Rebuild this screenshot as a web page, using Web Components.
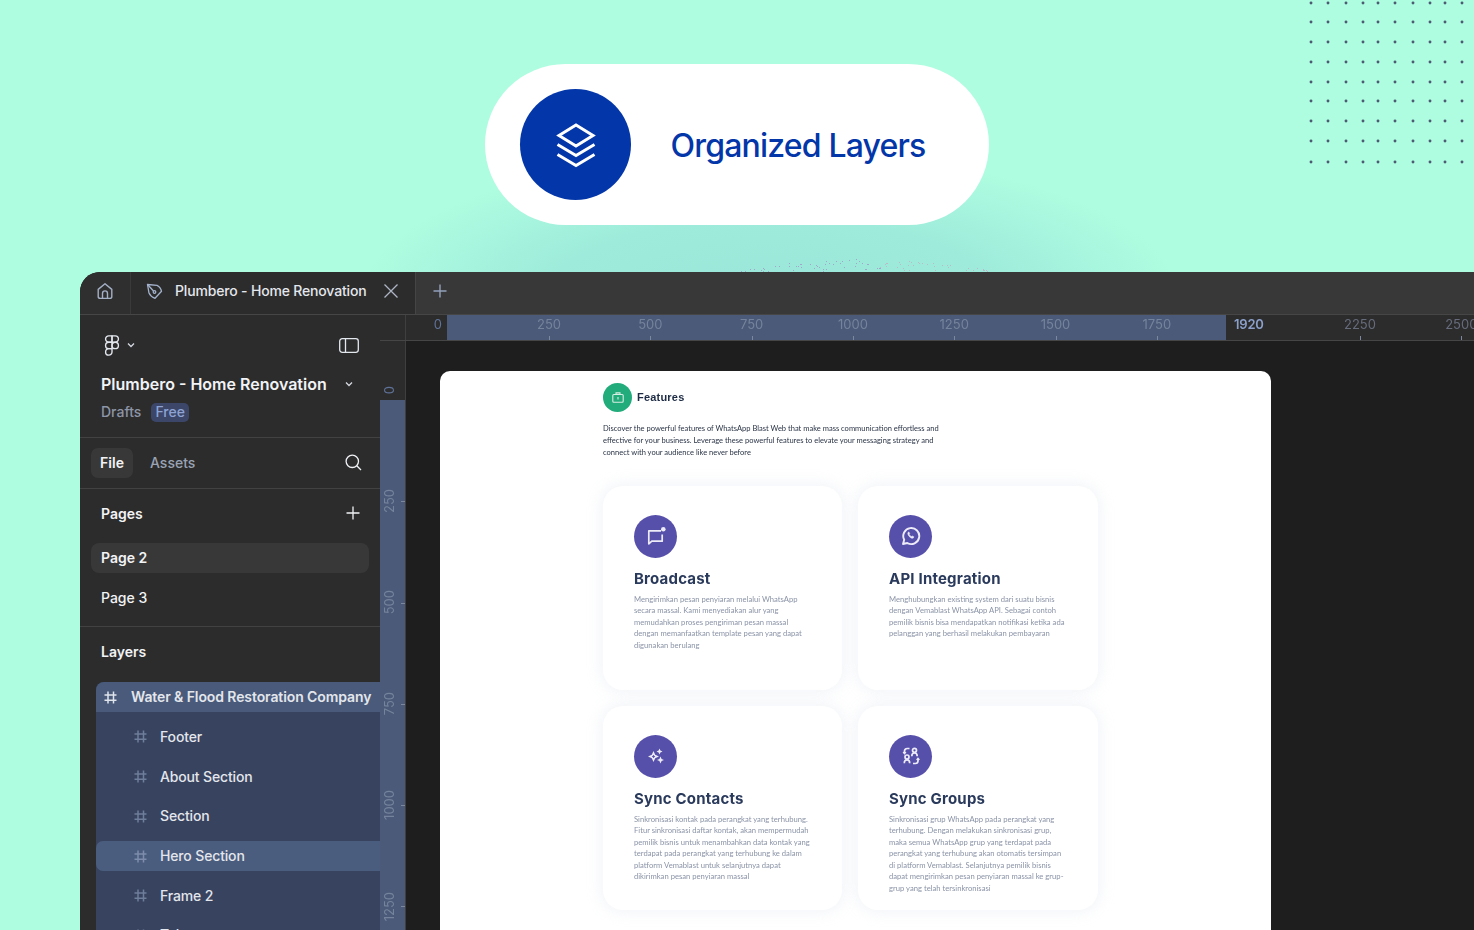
<!doctype html>
<html lang="en">
<head>
<meta charset="utf-8">
<title>Organized Layers</title>
<style>
  html, body { margin: 0; height: 930px; overflow: hidden; }
  body { width: 1474px; font-family: Inter, "Liberation Sans", sans-serif; background: #aefde0; }
</style>
</head>
<body>
<promo-page>
  <hero-banner slot="hero">Organized Layers</hero-banner>
  <editor-window slot="window">
    <tab-bar slot="tabs" title-text="Plumbero - Home Renovation"></tab-bar>
    <x-ruler slot="xruler"></x-ruler>
    <side-panel slot="side"></side-panel>
    <y-ruler slot="yruler"></y-ruler>
    <design-frame slot="canvas">
      <feature-card heading="Broadcast" icon="broadcast">Mengirimkan pesan penyiaran melalui WhatsApp<br>secara massal. Kami menyediakan alur yang<br>memudahkan proses pengiriman pesan massal<br>dengan memanfaatkan template pesan yang dapat<br>digunakan berulang</feature-card>
      <feature-card heading="API Integration" icon="whatsapp">Menghubungkan existing system dari suatu bisnis<br>dengan Vemablast WhatsApp API. Sebagai contoh<br>pemilik bisnis bisa mendapatkan notifikasi ketika ada<br>pelanggan yang berhasil melakukan pembayaran</feature-card>
      <feature-card heading="Sync Contacts" icon="sparkle">Sinkronisasi kontak pada perangkat yang terhubung.<br>Fitur sinkronisasi daftar kontak, akan mempermudah<br>pemilik bisnis untuk menambahkan data kontak yang<br>terdapat pada perangkat yang terhubung ke dalam<br>platform Vemablast untuk selanjutnya dapat<br>dikirimkan pesan penyiaran massal</feature-card>
      <feature-card heading="Sync Groups" icon="groups">Sinkronisasi grup WhatsApp pada perangkat yang<br>terhubung. Dengan melakukan sinkronisasi grup,<br>maka semua WhatsApp grup yang terdapat pada<br>perangkat yang terhubung akan otomatis tersimpan<br>di platform Vemablast. Selanjutnya pemilik bisnis<br>dapat mengirimkan pesan penyiaran massal ke grup-<br>grup yang telah tersinkronisasi</feature-card>
    </design-frame>
  </editor-window>
</promo-page>

<script>
const define = (name, html, setup) => {
  customElements.define(name, class extends HTMLElement {
    constructor() {
      super();
      const root = this.attachShadow({ mode: 'open' });
      root.innerHTML = typeof html === 'function' ? html(this) : html;
    }
    connectedCallback() {
      if (setup && !this._done) { this._done = true; setup(this.shadowRoot, this); }
    }
  });
};

const HASH = `<svg width="13" height="13" viewBox="0 0 13 13" fill="none" stroke="currentColor" stroke-width="1.5"><path d="M4 .5v12M9.500 .5v12M.5 4h12M.5 9.300h12"/></svg>`;

define('promo-page', `
<style>
  :host { display: block; width: 1474px; height: 930px; position: relative; overflow: hidden;
    background:
      radial-gradient(ellipse 410px 150px at 770px 300px, #9ae6d9 0%, #9eebdb 55%, rgba(174,253,224,0) 100%),
      #aefde0; }
  .top { height: 272px; }
  .win { padding-left: 80px; }
  svg.dots { position: absolute; left: 0; top: 0; pointer-events: none; }
</style>
<svg class="dots" width="1474" height="272"></svg>
<div class="top"><slot name="hero"></slot></div>
<div class="win"><slot name="window"></slot></div>
`, (root) => {
  const svg = root.querySelector('svg.dots');
  let out = '';
  const xs = [1311,1328,1346,1363,1378,1395,1413,1430,1445,1462];
  const ys = [3,22,42,62,82,101,121,141,162];
  ys.forEach(y => xs.forEach(x => { out += `<circle cx="${x}" cy="${y}" r="1.45" fill="#4c5a72"/>`; }));
  let s = 98765;
  const r = () => { s = (s * 1103515245 + 12345) & 0x7fffffff; return ((s >> 8) & 0xffff) / 0xffff; };
  for (let i = 0; i < 85; i++) {
    const x = 741 + r() * 250;
    const top = 272 - 13 * Math.pow(Math.sin(Math.PI * (x - 741) / 250), .6);
    const y = top + r() * (271 - top);
    const fill = x > 880 ? '#bdb9c9' : '#a3a6c8';
    out += `<rect x="${Math.round(x)}" y="${Math.round(y)}" width="1" height="1" fill="${fill}"/>`;
  }
  svg.innerHTML = out;
});

define('hero-banner', `
<style>
  :host { display: block; padding: 64px 0 0 485px; }
  .pill { width: 504px; height: 161px; box-sizing: border-box; padding-left: 35px; border-radius: 81px; background: #fff;
    display: flex; align-items: center; gap: 39.500px; }
  .disc { width: 111px; height: 111px; border-radius: 50%; background: #0336a8; display: flex; align-items: center; justify-content: center; flex: none; }
  .label { font: 500 32px/40px Inter, "Liberation Sans", sans-serif; letter-spacing: -.82px; color: #0336a8; padding-top: 2px; }
</style>
<div class="pill">
  <div class="disc">
    <svg width="42" height="46" viewBox="0 0 42 46" fill="none" stroke="#fff" stroke-width="3" stroke-linejoin="miter">
      <path d="M21 3 38 13.500 21 24 4 13.500Z"/>
      <path d="M2.500 22.500 21 33.500 39.500 22.500"/>
      <path d="M2.500 32.500 21 43.500 39.500 32.500"/>
    </svg>
  </div>
  <div class="label"><slot></slot></div>
</div>
`);

define('editor-window', `
<style>
  :host { display: block; width: 1394px; height: 658px; overflow: hidden; border-radius: 20px 0 0 0; background: #1e1e1e; }
  .grid { display: grid; grid-template-columns: 300px 26px 1fr; grid-template-rows: 43px 26px 1fr; height: 100%; filter: blur(.3px); }
  .tabs { grid-column: 1 / -1; }
  .x { grid-column: 2 / -1; }
  .side { grid-column: 1; grid-row: 2 / 4; min-height: 0; }
  .y { grid-column: 2; grid-row: 3; min-height: 0; }
  .c { grid-column: 3; grid-row: 3; min-height: 0; overflow: hidden; }
</style>
<div class="grid">
  <div class="tabs"><slot name="tabs"></slot></div>
  <div class="side"><slot name="side"></slot></div>
  <div class="x"><slot name="xruler"></slot></div>
  <div class="y"><slot name="yruler"></slot></div>
  <div class="c"><slot name="canvas"></slot></div>
</div>
`);

define('tab-bar', (el) => `
<style>
  :host { display: block; height: 43px; box-sizing: border-box; background: #383838; border-bottom: 1px solid #464646; }
  .bar { display: flex; height: 42px; align-items: stretch; }
  .home { width: 51px; flex: none; background: #2f2f2f; border-right: 1px solid #3a3a3a; box-sizing: border-box; display: flex; align-items: center; padding: 0 0 4px 16px; color: #a4b0c6; }
  .tab { width: 285px; flex: none; background: #2c2c2c; border-right: 1px solid #454545; box-sizing: border-box; display: flex; align-items: center; padding: 0 0 4px 15px; color: #e4e7ec;
    font: 500 14px/20px Inter, "Liberation Sans", sans-serif; letter-spacing: -.17px; }
  .name { margin-left: 12px; width: 191px; white-space: nowrap; }
  .x { margin-left: 17px; display: flex; color: #aeb6c5; }
  .add { margin-left: 17px; padding-bottom: 4px; display: flex; align-items: center; color: #93a0ba; }
  .pen { color: #a4b3cd; display: flex; }
</style>
<div class="bar">
  <div class="home"><svg width="18" height="18" viewBox="0 0 18 18" fill="none" stroke="currentColor" stroke-width="1.400" stroke-linejoin="round"><path d="M2.200 7.400 9 1.800l6.800 5.600v7a2 2 0 0 1-2 2H4.200a2 2 0 0 1-2-2Z"/><path d="M6.500 16.400v-5a2.500 2.500 0 0 1 5 0v5"/></svg></div>
  <div class="tab">
    <span class="pen"><svg width="17" height="17" viewBox="0 0 17 17" fill="none" stroke="currentColor" stroke-width="1.300" stroke-linejoin="round"><path d="M1.500 1.500 11 2.300c2.400 1.200 4 3 4.500 6l-6.500 7c-2.800-.8-4.800-2.600-6-5.200Z"/><path d="M1.500 1.500 7.500 8" /><circle cx="8.500" cy="9" r="1.300"/></svg></span>
    <span class="name">${el.getAttribute('title-text')}</span>
    <span class="x"><svg width="16" height="16" viewBox="0 0 16 16" fill="none" stroke="currentColor" stroke-width="1.300"><path d="M1.500 1.500l13 13M14.500 1.500l-13 13"/></svg></span>
  </div>
  <div class="add"><svg width="14" height="14" viewBox="0 0 14 14" fill="none" stroke="currentColor" stroke-width="1.400"><path d="M7 .5v13M.5 7h13"/></svg></div>
</div>
`);

const xCell = (n) => `<div class="cell"><span>${n}</span></div>`;
define('x-ruler', `
<style>
  :host { display: block; height: 26px; overflow: hidden; background: #2c2c2c; border-bottom: 1px solid #464646; box-sizing: border-box; font: 400 13px/1 Inter, "Liberation Sans", sans-serif; }
  .row { display: flex; height: 25px; width: 1200px; }
  .corner { width: 26px; flex: none; box-sizing: border-box; border-right: 1px solid #3f3f3f; }
  .zero { width: 41px; flex: none; box-sizing: border-box; text-align: right; padding: 3px 5px 0 0; color: #5f7299; }
  .hi { width: 779px; flex: none; background: #4a5a78; display: flex; padding-left: 51.400px; box-sizing: border-box; color: #76839c; }
  .cell { width: 101.300px; flex: none; height: 100%; position: relative; text-align: center; padding-top: 3px; box-sizing: border-box; white-space: nowrap; }
  .cell::after { content: ""; position: absolute; left: 50%; bottom: 0; width: 1px; height: 4px; background: #7c88a0; }
  .rest { display: flex; color: #666c7c; }
  .lead { width: 83.350px; flex: none; box-sizing: border-box; padding: 3px 0 0 8px; color: #8a9fca; font-weight: 600; letter-spacing: -.2px; }
</style>
<div class="row">
  <div class="corner"></div>
  <div class="zero">0</div>
  <div class="hi">${[250,500,750,1000,1250,1500,1750].map(xCell).join('')}</div>
  <div class="rest"><div class="lead">1920</div>${[2250,2500].map(xCell).join('')}</div>
</div>
`);

define('y-ruler', `
<style>
  :host { display: block; height: 100%; overflow: hidden; background: #2c2c2c; box-sizing: border-box; border-right: 1px solid #3f3f3f; font: 400 13px/1 Inter, "Liberation Sans", sans-serif; }
  .col { display: flex; flex-direction: column; height: 100%; }
  .zero { height: 59px; flex: none; box-sizing: border-box; display: flex; align-items: flex-end; justify-content: flex-start; padding: 0 0 6px 3px; color: #5f7299; }
  .hi { flex: 1; background: #4a5a78; color: #76839c; padding-top: 50.600px; box-sizing: border-box; min-height: 0; overflow: hidden; }
  .cell { height: 101.300px; display: flex; align-items: center; padding-left: 3px; position: relative; box-sizing: border-box; }
  .cell::after { content: ""; position: absolute; right: 0; top: 50%; width: 4px; height: 1px; background: #7c88a0; }
  span { writing-mode: vertical-rl; transform: rotate(180deg); white-space: nowrap; }
</style>
<div class="col">
  <div class="zero"><span>0</span></div>
  <div class="hi">${[250,500,750,1000,1250].map(n => `<div class="cell"><span>${n}</span></div>`).join('')}</div>
</div>
`);

define('side-panel', `
<style>
  :host { display: block; height: 100%; overflow: hidden; background: #2c2c2c; color: #f2f3f5; font: 500 14px/20px Inter, "Liberation Sans", sans-serif; box-sizing: border-box; }
  .sec { border-bottom: 1px solid #424242; box-sizing: border-box; }
  .head { height: 123px; padding: 19px 21px 0 21px; }
  .r { display: flex; align-items: center; height: 22px; }
  .r1 { justify-content: space-between; }
  .logo { display: flex; align-items: center; gap: 4px; }
  .r2 { margin-top: 17px; font-weight: 600; font-size: 16px; letter-spacing: 0; color: #f1f3f6; gap: 18px; white-space: nowrap; }
  .r3 { margin-top: 6px; color: #8d95a7; gap: 10px; }
  .free { background: #3b4668; color: #8ea3d4; border-radius: 5px; height: 19px; padding: 0 4px; display: flex; align-items: center; }
  .tabs { height: 51px; padding: 10px 18px 0 11px; display: flex; align-items: flex-start; }
  .file { width: 42px; height: 30px; border-radius: 7px; background: #383838; font-weight: 600; display: flex; align-items: center; justify-content: center; }
  .assets { margin-left: 17px; height: 30px; display: flex; align-items: center; color: #9aa3b4; }
  .search { margin-left: auto; height: 28px; display: flex; align-items: center; }
  .pages { height: 138px; }
  .ptitle { height: 50px; padding: 0 20px 2px 21px; box-sizing: border-box; display: flex; align-items: center; justify-content: space-between; font-weight: 600; }
  .ptitle span { position: relative; top: 1px; }
  .plist { display: flex; flex-direction: column; gap: 10px; margin: 4px 11px 0 11px; }
  .page { height: 30px; border-radius: 8px; padding-left: 10px; display: flex; align-items: center; }
  .page.on { background: #383838; font-weight: 600; }
  .ltitle { height: 49px; padding-left: 21px; display: flex; align-items: center; font-weight: 600; }
  .list { margin: 6px 0 0 16px; background: #38435f; border-radius: 8px 0 0 0; display: flex; flex-direction: column; gap: 9.700px; padding-bottom: 12px; }
  .item { height: 30px; flex: none; display: flex; align-items: center; padding-left: 38px; gap: 13px; color: #e3e6ec; white-space: nowrap; letter-spacing: -.15px; }
  .item svg { color: #6e7e9b; flex: none; }
  .item.root { padding-left: 8px; gap: 14px; background: #495a7a; border-radius: 8px 0 0 0; font-weight: 600; margin-bottom: .3px; letter-spacing: -.1px; }
  .item.root svg { color: #e0e4ec; }
  .item.sel { background: #4b5d7e; border-radius: 7px 0 0 7px; }
  .item.sel svg { color: #7d8dab; }
</style>
<div class="sec head">
  <div class="r r1">
    <div class="logo">
      <svg width="22" height="22" viewBox="0 0 24 24" fill="none" stroke="#e3e7ee" stroke-width="1.500" stroke-linejoin="round"><path d="M5 5.500A3.500 3.500 0 0 1 8.500 2H12v7H8.500A3.500 3.500 0 0 1 5 5.500Z"/><path d="M12 2h3.500a3.500 3.500 0 1 1 0 7H12V2Z"/><path d="M12 12.500a3.500 3.500 0 1 1 7 0 3.500 3.500 0 1 1-7 0Z"/><path d="M5 19.500A3.500 3.500 0 0 1 8.500 16H12v3.500a3.500 3.500 0 1 1-7 0Z"/><path d="M5 12.500A3.500 3.500 0 0 1 8.500 9H12v7H8.500A3.500 3.500 0 0 1 5 12.500Z"/></svg>
      <svg width="8" height="6" viewBox="0 0 8 6" fill="none" stroke="#d5d9e0" stroke-width="1.300"><path d="M1 1.500 4 4.500 7 1.500"/></svg>
    </div>
    <svg width="20" height="15" viewBox="0 0 20 15" fill="none" stroke="#e3e7ee" stroke-width="1.300"><rect x=".7" y=".7" width="18.600" height="13.600" rx="2.500"/><path d="M6.500 .7v13.600"/></svg>
  </div>
  <div class="r r2"><span>Plumbero - Home Renovation</span><svg width="8" height="6" viewBox="0 0 8 6" fill="none" stroke="#d5d9e0" stroke-width="1.300"><path d="M1 1.500 4 4.500 7 1.500"/></svg></div>
  <div class="r r3"><span>Drafts</span><span class="free">Free</span></div>
</div>
<div class="sec tabs">
  <div class="file">File</div>
  <div class="assets">Assets</div>
  <div class="search"><svg width="17" height="17" viewBox="0 0 17 17" fill="none" stroke="#f0f2f5" stroke-width="1.300"><circle cx="7.300" cy="7.300" r="6.200"/><path d="M11.800 11.800 16 16"/></svg></div>
</div>
<div class="sec pages">
  <div class="ptitle"><span>Pages</span><svg width="14" height="14" viewBox="0 0 14 14" fill="none" stroke="#f0f2f5" stroke-width="1.300"><path d="M7 .5v13M.5 7h13"/></svg></div>
  <div class="plist"><div class="page on">Page 2</div><div class="page">Page 3</div></div>
</div>
<div class="ltitle">Layers</div>
<div class="list">
  <div class="item root">${HASH}<span>Water &amp; Flood Restoration Company</span></div>
  <div class="item">${HASH}<span>Footer</span></div>
  <div class="item">${HASH}<span>About Section</span></div>
  <div class="item">${HASH}<span>Section</span></div>
  <div class="item sel">${HASH}<span>Hero Section</span></div>
  <div class="item">${HASH}<span>Frame 2</span></div>
  <div class="item">${HASH}<span>Tabs</span></div>
</div>
`);

define('design-frame', `
<style>
  :host { display: block; padding: 30px 0 0 34px; }
  .frame { width: 831px; height: 600px; background: #fff; border-radius: 10px 10px 0 0; box-sizing: border-box; padding: 12px 0 0 163px; filter: blur(.25px); }
  .hd { display: flex; align-items: center; gap: 5px; }
  .badge { width: 29px; height: 29px; border-radius: 50%; background: #22ab7b; display: flex; align-items: center; justify-content: center; }
  .t { font: 700 11px/14px "Liberation Sans", Inter, sans-serif; color: #1d2b44; letter-spacing: .2px; position: relative; top: -1px; }
  .desc { margin-top: 11px; font: 400 7.540px/11.900px Lato, "Liberation Sans", sans-serif; color: #2a3446; white-space: nowrap; }
  .cards { margin-top: 27px; display: grid; grid-template-columns: 239px 240px; grid-auto-rows: 204px; gap: 16px; }
</style>
<div class="frame">
  <div class="hd">
    <div class="badge"><svg width="12" height="11" viewBox="0 0 12 11" fill="none" stroke="#d7efe6" stroke-width="1.100"><rect x=".8" y="2.500" width="10.400" height="7.700" rx="1"/><path d="M4 2.500V.9h4v1.600M6 5v2.500"/></svg></div>
    <div class="t">Features</div>
  </div>
  <div class="desc">Discover the powerful features of WhatsApp Blast Web that make mass communication effortless and<br>effective for your business. Leverage these powerful features to elevate your messaging strategy and<br>connect with your audience like never before</div>
  <div class="cards"><slot></slot></div>
</div>
`);

const CARD_ICONS = {
  broadcast: `<svg width="22" height="22" viewBox="0 0 22 22" fill="none" stroke="#ecebf7" stroke-width="1.700"><path d="M16 5.800H3.800v13l3-2.600H17.200V9.500" stroke-linejoin="round"/><circle cx="18.300" cy="4.300" r="2.300" fill="#ecebf7" stroke="none"/></svg>`,
  whatsapp: `<svg width="20" height="20" viewBox="0 0 20 20" fill="none" stroke="#ecebf7" stroke-width="1.900"><path d="M2 18l1.200-4.200A8 8 0 1 1 6.300 17Z" stroke-linejoin="round"/><path d="M7.200 6.300c-.8 1-.4 2.500 1 4.100s3 2.300 4.200 1.500l.5-1.100-1.800-.9-.7.6c-.9-.3-1.800-1.100-2.200-2.200l.5-.7-.8-1.700Z" fill="#ecebf7" stroke-width=".5"/></svg>`,
  sparkle: `<svg width="18" height="18" viewBox="0 0 18 18" fill="#ecebf7"><path d="M6.500 4 8.200 7.800 12 9.500 8.200 11.200 6.500 15 4.800 11.200 1 9.500 4.800 7.800Z"/><path d="M6.500 7.800 7.200 8.800 8.200 9.500 7.200 10.200 6.500 11.200 5.800 10.200 4.800 9.500 5.800 8.800Z" fill="#5750ab"/><path d="M12.500 1.500l.9 2.100 2.100.9-2.100.9-.9 2.100-.9-2.100-2.100-.9 2.100-.9ZM13.500 9.500l1.100 2.400 2.400 1.100-2.400 1.100-1.100 2.400-1.100-2.400-2.400-1.100 2.400-1.100Z"/></svg>`,
  groups: `<svg width="20" height="20" viewBox="0 0 20 20" fill="none" stroke="#ecebf7" stroke-width="1.700"><circle cx="13.500" cy="4.300" r="2"/><path d="M10.800 10.300c0-2.300 1.100-3.300 2.700-3.300s2.700 1 2.700 3.300"/><circle cx="6" cy="11" r="2"/><path d="M3.300 17.200c0-2.300 1.100-3.300 2.700-3.300s2.700 1 2.700 3.300"/><path d="M8.500 2.500H6.200A2.700 2.700 0 0 0 3.500 5.200v2M4.800 6 3.500 7.400 2.200 6M12 17.500h2.300a2.700 2.700 0 0 0 2.700-2.700v-2M15.700 14l1.300-1.400 1.300 1.400"/></svg>`
};

define('feature-card', (el) => `
<style>
  :host { display: block; background: #fff; border-radius: 20px; box-sizing: border-box; padding: 29px 20px 0 31px; box-shadow: 0 0 14px 3px rgba(226,231,240,.42); }
  .ic { width: 43px; height: 43px; border-radius: 50%; background: #5750ab; display: flex; align-items: center; justify-content: center; }
  h3 { margin: 12px 0 0; font: 700 15px/18px Inter, "Liberation Sans", sans-serif; color: #2a3a5c; letter-spacing: .2px; white-space: nowrap; }
  p { margin: 6px 0 0; font: 400 7.650px/11.550px Lato, "Liberation Sans", sans-serif; color: #8a93a6; white-space: nowrap; }
</style>
<div class="ic">${CARD_ICONS[el.getAttribute('icon')]}</div>
<h3>${el.getAttribute('heading')}</h3>
<p><slot></slot></p>
`);
</script>
</body>
</html>
